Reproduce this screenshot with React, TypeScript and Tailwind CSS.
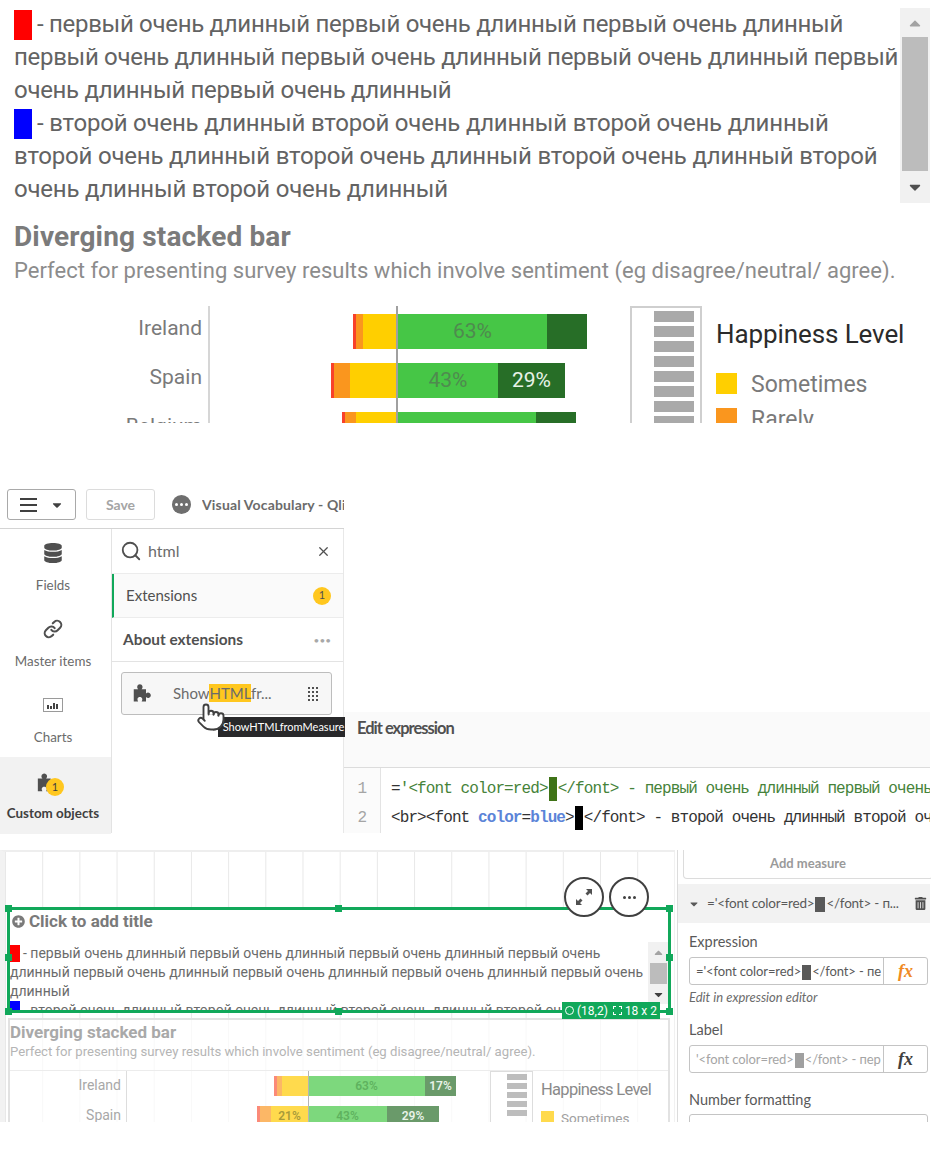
import React from "react";
import { FaDatabase, FaPlusCircle, FaTrashAlt, FaCaretDown, FaCaretUp } from "react-icons/fa";
import { Search, X, Pointer, Link } from "lucide-react";

const C = { red: "#f8412a", orange: "#fa961e", yellow: "#ffcf00", green: "#46c646", dark: "#276e27" };
type Seg = { w: number; c: string; t?: string; tc?: string };
type Row = { name: string; start: number; segs: Seg[] };

const bigRows: Row[] = [
  { name: "Ireland", start: 143, segs: [{ w: 3, c: C.red }, { w: 7, c: C.orange }, { w: 35, c: C.yellow }, { w: 149, c: C.green, t: "63%", tc: "#4f8a4f" }, { w: 40, c: C.dark }] },
  { name: "Spain", start: 121, segs: [{ w: 3, c: C.red }, { w: 16, c: C.orange }, { w: 48, c: C.yellow }, { w: 100, c: C.green, t: "43%", tc: "#4f8a4f" }, { w: 67, c: C.dark, t: "29%", tc: "#e8f3e8" }] },
  { name: "Belgium", start: 132, segs: [{ w: 3, c: C.red }, { w: 11, c: C.orange }, { w: 42, c: C.yellow }, { w: 138, c: C.green }, { w: 40, c: C.dark }] },
];
const smallRows: Row[] = [
  { name: "Ireland", start: 147, segs: [{ w: 3, c: "#fb8a78" }, { w: 5, c: "#fcb766" }, { w: 26, c: "#ffda4d" }, { w: 117, c: "#7dd87d", t: "63%", tc: "#5fb25f" }, { w: 31, c: "#6a9a6a", t: "17%", tc: "#e8f3e8" }] },
  { name: "Spain", start: 130, segs: [{ w: 3, c: "#fb8a78" }, { w: 11, c: "#fcb766" }, { w: 37, c: "#ffda4d", t: "21%", tc: "#a89a3a" }, { w: 79, c: "#7dd87d", t: "43%", tc: "#5fb25f" }, { w: 52, c: "#6a9a6a", t: "29%", tc: "#e8f3e8" }] },
];

function Puzzle({ size, className }: { size: number; className?: string }) {
  return (
    <svg width={size} height={size} viewBox="0 0 24 24" fill="currentColor" className={className}>
      <path d="M2 7h5c-1-1-1.2-2-1-3 .3-1.5 1.6-2.5 3-2.5s2.7 1 3 2.5c.2 1 0 2-1 3h5v5c1-1 2-1.2 3-1 1.5.3 2.5 1.6 2.5 3s-1 2.7-2.5 3c-1 .2-2 0-3-1v5h-5c.8-1 1-2 .7-3-.3-1.3-1.4-2-2.7-2s-2.4.7-2.7 2c-.3 1 0 2 .7 3H2z" />
    </svg>
  );
}

function Bar({ row, h }: { row: Row; h: string }) {
  return (
    <div className={`flex ${h}`} style={{ marginLeft: row.start }}>
      {row.segs.map((s, i) => (
        <div key={i} className="flex shrink-0 items-center justify-center" style={{ width: s.w, backgroundColor: s.c, color: s.tc }}>
          {s.t}
        </div>
      ))}
    </div>
  );
}

function MiniBars({ count, cls }: { count: number; cls: string }) {
  return (
    <>
      {Array.from({ length: count }).map((_, i) => (
        <div key={i} className={cls} />
      ))}
    </>
  );
}

const line1 = "первый очень длинный";
const line2 = "второй очень длинный";

function TopSection() {
  return (
    <section className="h-[423px] overflow-hidden">
      <div className="flex h-[206px] pt-2">
        <div className="w-[900px] shrink-0 pl-[14px] text-[24px] leading-[33px] whitespace-nowrap text-[#636363]">
          <div className="tracking-[-0.3px]">
            <div className="flex items-center"><span className="mr-[5px] h-[30px] w-[18px] bg-[#ff0000]" /><span>- {line1} {line1} {line1}</span></div>
            <div>{line1} {line1} {line1} первый</div>
            <div>очень длинный {line1}</div>
          </div>
          <div className="tracking-[-0.2px]">
            <div className="flex items-center"><span className="mr-[5px] h-[30px] w-[18px] bg-[#0000ff]" /><span>- {line2} {line2} {line2}</span></div>
            <div>{line2} {line2} {line2} второй</div>
            <div>очень длинный {line2}</div>
          </div>
        </div>
        <div className="flex h-[195px] w-[30px] flex-col items-center bg-[#f1f1f1]">
          <div className="flex h-[29px] items-center text-[#a3a3a3]"><FaCaretUp size={18} /></div>
          <div className="h-[134px] w-[26px] bg-[#bcbcbc]" />
          <div className="flex h-[32px] items-center text-[#505050]"><FaCaretDown size={18} /></div>
        </div>
      </div>
      <h2 className="mt-[13px] pl-[14px] text-[28px] leading-[36px] font-bold tracking-[0.15px] text-[#7b7b7b]">Diverging stacked bar</h2>
      <p className="pl-[14px] text-[22px] leading-[32px] tracking-[0.02px] whitespace-nowrap text-[#8c8c8c]">Perfect for presenting survey results which involve sentiment (eg disagree/neutral/ agree).</p>
      <div className="relative mt-[19px] flex h-[117px] overflow-hidden">
        <div className="w-[630px] shrink-0">
          {bigRows.map((r) => (
            <div key={r.name} className="flex h-[49px]">
              <div className="w-[208px] shrink-0 pt-[8px] pr-[6px] text-right text-[21px] leading-[28px] text-[#7a7a7a]">{r.name}</div>
              <div className="flex-1 border-l-2 border-[#d6d6d6] py-2 text-[21px] leading-none"><Bar row={r} h="h-[35px]" /></div>
            </div>
          ))}
          <div className="absolute top-0 left-[396px] h-full w-[2px] bg-[#a0a0a0]" />
        </div>
        <div className="flex w-[72px] shrink-0 flex-col items-end gap-[4px] border-2 border-b-0 border-[#cfcfcf] pt-[3px] pr-[6px]">
          <MiniBars count={8} cls="h-[11px] w-[40px] shrink-0 bg-[#a9a9a9]" />
        </div>
        <div className="pl-[14px]">
          <div className="mt-[12px] text-[26px] leading-[32px] tracking-[-0.1px] whitespace-nowrap text-[#2b2b2b]">Happiness Level</div>
          <div className="mt-[23px] flex h-[21px] items-center"><span className="h-[21px] w-[21px] bg-[#ffcf00]" /><span className="ml-[14px] pt-[4px] text-[23px] text-[#7a7a7a]">Sometimes</span></div>
          <div className="mt-[14px] flex h-[21px] items-center"><span className="h-[21px] w-[21px] bg-[#fa961e]" /><span className="ml-[14px] pt-[4px] text-[23px] text-[#7a7a7a]">Rarely</span></div>
        </div>
      </div>
    </section>
  );
}

function NavItem({ icon, label, active }: { icon: React.ReactNode; label: string; active?: boolean }) {
  return (
    <div className={`flex w-[111px] flex-col items-center pr-[5px] ${active ? "h-[77px] bg-[#f2f2f2] pt-[14px] font-bold text-[#404040]" : "h-[76px] pt-[12px] text-[#6b6b6b]"}`}>
      <div className="relative flex h-[24px] items-center justify-center text-[#505050]">{icon}</div>
      <div className={`text-[13.4px] leading-[18px] ${active ? "mt-[9px]" : "mt-[11px]"}`}>{label}</div>
    </div>
  );
}

function MiddleSection() {
  return (
    <section className="mt-[65px] flex h-[345px] font-['Lato','Noto_Sans',sans-serif]">
      <div className="relative w-[344px] shrink-0">
        <div className="flex h-[40px] items-start gap-[10px] pt-[1px] pl-[7px]">
          <div className="flex h-[31px] w-[69px] items-center justify-center gap-[13px] rounded-[3px] border border-[#a9a9a9]">
            <div className="flex w-[17px] flex-col gap-[4px]"><span className="h-[2px] bg-[#404040]" /><span className="h-[2px] bg-[#404040]" /><span className="h-[2px] bg-[#404040]" /></div>
            <FaCaretDown size={14} className="text-[#404040]" />
          </div>
          <div className="flex h-[31px] w-[69px] items-center justify-center rounded-[3px] border border-[#dcdcdc] text-[14px] font-bold text-[#a5a5a5]">Save</div>
          <div className="ml-[7px] flex h-[31px] w-[150px] items-center gap-[11px] whitespace-nowrap">
            <span className="flex h-[19px] w-[19px] shrink-0 items-center justify-center gap-[2px] rounded-full bg-[#6e6e6e]"><i className="h-[3px] w-[3px] rounded-full bg-white" /><i className="h-[3px] w-[3px] rounded-full bg-white" /><i className="h-[3px] w-[3px] rounded-full bg-white" /></span>
            <span className="w-[142px] shrink-0 overflow-hidden text-[14px] font-bold tracking-[0.15px] text-[#6b6b6b]">Visual Vocabulary - Qlik</span>
          </div>
        </div>
        <div className="flex h-[305px] border-t border-[#d4d4d4]">
          <div className="w-[112px] shrink-0 border-r border-[#e3e3e3]">
            <NavItem icon={<FaDatabase size={20} />} label="Fields" />
            <NavItem icon={<Link size={20} strokeWidth={2.5} />} label="Master items" />
            <NavItem icon={
              <svg width="20" height="16" viewBox="0 0 20 16"><rect x="0.5" y="1.5" width="19" height="13" fill="none" stroke="#9a9a9a" /><path d="M5 8v4M8 9v3M11 6v6M14 7v5" stroke="#444" strokeWidth="2" /></svg>
            } label="Charts" />
            <NavItem active icon={
              <><Puzzle size={22} className="mr-[12px]" /><span className="absolute top-[7px] left-[10px] flex h-[18px] w-[18px] items-center justify-center rounded-full bg-[#ffc71f] text-[11px] font-normal text-[#404040]">1</span></>
            } label="Custom objects" />
          </div>
          <div className="flex-1 border-r border-[#e8e8e8]">
            <div className="flex h-[45px] items-center border-b border-[#ececec] pr-[12px] pl-[8px] text-[#505050]">
              <Search size={22} strokeWidth={2} />
              <span className="ml-[6px] flex-1 text-[16px] text-[#6b6b6b]">html</span>
              <X size={15} />
            </div>
            <div className="flex h-[44px] items-center justify-between border-b border-l-2 border-[#ececec] border-l-[#11a85a] bg-[#fafafa] pr-[12px] pl-[12px] text-[15px] text-[#505050]">
              <span>Extensions</span>
              <span className="flex h-[18px] w-[18px] items-center justify-center rounded-full bg-[#ffc71f] text-[11px]">1</span>
            </div>
            <div className="flex h-[44px] items-center justify-between border-b border-[#e3e3e3] pr-[12px] pl-[11px] text-[15.4px] font-bold text-[#505050]">
              <span>About extensions</span>
              <span className="text-[10px] leading-none font-normal text-[#a8a8a8]">•••</span>
            </div>
            <div className="mt-[10px] mr-[11px] ml-[9px] flex h-[43px] items-center rounded-[3px] border border-[#bdbdbd] bg-[#f7f7f7] pr-[13px] pl-[10px] text-[15px] text-[#6b6b6b]">
              <Puzzle size={21} className="text-[#505050]" />
              <span className="ml-[20px] flex-1 whitespace-nowrap">Show<span className="bg-[#ffc71f]">HTML</span>fr...</span>
              <div className="grid grid-cols-3 gap-[2px]">
                {Array.from({ length: 12 }).map((_, i) => <i key={i} className="h-[2px] w-[2px] bg-[#505050]" />)}
              </div>
            </div>
          </div>
        </div>
        <div className="absolute top-[229px] left-[218px] flex h-[20px] w-[127px] items-center justify-center bg-[#28282a] pl-[4px] text-[11px] whitespace-nowrap text-white">ShowHTMLfromMeasure</div>
        <Pointer size={30} strokeWidth={1.5} className="absolute top-[214px] left-[196px] fill-white text-[#404040]" />
      </div>
      <div className="w-[586px] shrink-0 pt-[224px]">
        <div className="flex h-[56px] items-start border-b border-[#dcdcdc] bg-[#fafafa] pt-[4px] pl-[13px] text-[16.5px] font-bold tracking-[-1px] text-[#505050]">Edit expression</div>
        <div className="flex h-[65px] overflow-hidden font-['Liberation_Mono',monospace] text-[16px] leading-[29px] whitespace-nowrap">
          <div className="w-[37px] shrink-0 border-r border-[#e3e3e3] bg-[#fbfbfb] pt-[7px] pr-[13px] text-right text-[#a5a5a5]">
            <div>1</div><div>2</div>
          </div>
          <div className="w-[549px] overflow-hidden pt-[7px] pl-[10px] tracking-[-0.9px]">
            <div className="text-[#46833a]"><span className="text-[#333]">=</span>'&lt;font color=red&gt;<span className="mx-[1px] inline-block h-[24px] w-[8px] bg-[#3f7317] align-middle" />&lt;/font&gt; - первый очень длинный первый очень</div>
            <div className="text-[#333]">&lt;br&gt;&lt;font <span className="font-bold text-[#5b84d8]">color</span>=<span className="font-bold text-[#5b84d8]">blue</span>&gt;<span className="mx-[1px] inline-block h-[24px] w-[8px] bg-black align-middle" />&lt;/font&gt; - второй очень длинный второй очень</div>
          </div>
        </div>
      </div>
    </section>
  );
}

function Handle({ cls }: { cls: string }) {
  return <span className={`absolute h-[7px] w-[7px] bg-[#11a85a] ${cls}`} />;
}

function Canvas() {
  return (
    <div className="relative h-[272px] w-[675px] shrink-0 overflow-hidden border-t-2 border-l-[5px] border-[#eeeeee] border-l-[#f2f2f2] bg-[linear-gradient(to_right,#e8e8e8_1px,transparent_1px)] bg-[size:37.2px_100%] bg-[position:0px_0px] pt-[55px]">
      <div className="absolute top-[25px] right-[26px] z-10 flex gap-[5px]">
        <div className="flex h-[40px] w-[40px] items-center justify-center rounded-full border-2 border-[#404040] bg-white">
          <svg width="20" height="20" viewBox="0 0 20 20" fill="#505050"><path d="M12 2h6v6l-2-2-2.5 2.5-2-2L14 4zM8 18H2v-6l2 2 2.5-2.5 2 2L6 16z" /></svg>
        </div>
        <div className="flex h-[40px] w-[40px] items-center justify-center gap-[2px] rounded-full border-2 border-[#404040] bg-white">
          <i className="h-[3px] w-[3px] rounded-full bg-[#404040]" /><i className="h-[3px] w-[3px] rounded-full bg-[#404040]" /><i className="h-[3px] w-[3px] rounded-full bg-[#404040]" />
        </div>
      </div>
      <div className="relative ml-[2px] h-[106px] w-[664px] border-[3px] border-[#11a85a] bg-white">
        <div className="flex h-[23px] items-center gap-[4px] pl-[2px] text-[17px] font-bold text-[#7a7a7a]">
          <FaPlusCircle size={13} /><span>Click to add title</span>
        </div>
        <div className="mt-[9px] flex h-[68px] overflow-hidden">
          <div className="w-[638px] shrink-0 pt-[2px] text-[14px] leading-[19px] whitespace-nowrap text-[#6b6b6b]">
            <div className="flex items-center"><span className="mr-[3px] h-[17px] w-[10px] bg-[#ff0000]" />- {line1} {line1} {line1} первый очень</div>
            <div>длинный {line1} {line1} {line1} первый очень</div>
            <div>длинный</div>
            <div className="flex items-start"><span className="mr-[3px] h-[12px] w-[10px] bg-[#0000ff]" />- {line2} {line2} {line2} второй оч</div>
          </div>
          <div className="flex h-[62px] w-[20px] flex-col items-center bg-[#f1f1f1]">
            <div className="flex h-[21px] items-center text-[#a3a3a3]"><FaCaretUp size={13} /></div>
            <div className="h-[21px] w-[17px] bg-[#bcbcbc]" />
            <div className="flex h-[20px] items-center text-[#404040]"><FaCaretDown size={13} /></div>
          </div>
        </div>
        <Handle cls="-top-[5px] -left-[5px]" /><Handle cls="-top-[5px] left-[325px]" /><Handle cls="-top-[5px] -right-[5px]" />
        <Handle cls="top-[44px] -left-[5px]" /><Handle cls="top-[44px] -right-[5px]" />
        <Handle cls="-bottom-[5px] -left-[5px]" /><Handle cls="-bottom-[5px] left-[325px]" /><Handle cls="-bottom-[5px] -right-[5px]" />
        <div className="absolute -bottom-[9px] left-[552px] flex h-[17px] w-[98px] items-center justify-center gap-[3px] bg-[#11a85a] text-[12px] whitespace-nowrap text-white">
          <span className="h-[9px] w-[9px] rounded-full border border-white" /> (18,2) <span className="ml-[2px] h-[9px] w-[9px] border border-dashed border-white" /> 18 x 2
        </div>
      </div>
      <div className="mt-[5px] ml-[3px] h-[120px] w-[662px] border-2 border-[#e2e2e2] bg-white/70 pt-[1px]">
        <div className="text-[17px] leading-[22px] font-bold text-[#a9a9a9]">Diverging stacked bar</div>
        <div className="text-[13.15px] leading-[18px] whitespace-nowrap text-[#b5b5b5]">Perfect for presenting survey results which involve sentiment (eg disagree/neutral/ agree).</div>
        <div className="relative mt-[9px] flex border-t border-[#ececec]">
          <div className="w-[480px] shrink-0">
            {smallRows.map((r) => (
              <div key={r.name} className="flex h-[30px]">
                <div className="w-[116px] shrink-0 pt-[5px] pr-[5px] text-right text-[14px] leading-[18px] text-[#a8a8a8]">{r.name}</div>
                <div className="flex-1 border-l border-[#dddddd] py-[5px] text-[12px] font-semibold"><Bar row={r} h="h-[20px]" /></div>
              </div>
            ))}
            <div className="absolute top-0 left-[298px] h-full w-px bg-[#b5b5b5]" />
          </div>
          <div className="flex w-[43px] shrink-0 flex-col items-end gap-[3px] border border-b-0 border-[#dddddd] pt-[2px] pr-[5px]">
            <MiniBars count={5} cls="h-[6px] w-[20px] shrink-0 bg-[#bdbdbd]" />
          </div>
          <div className="pl-[8px]">
            <div className="mt-[8px] text-[16.5px] leading-[22px] tracking-[-0.7px] whitespace-nowrap text-[#8a8a8a]">Happiness Level</div>
            <div className="mt-[10px] flex items-start"><span className="h-[13px] w-[13px] bg-[#ffda4d]" /><span className="ml-[7px] text-[13.5px] leading-[14px] text-[#a0a0a0]">Sometimes</span></div>
          </div>
        </div>
      </div>
    </div>
  );
}

function Field({ label, value, muted, fx, tail }: { label: string; value: string; muted?: boolean; fx: string; tail: string }) {
  return (
    <div>
      <div className="text-[14.5px] leading-[20px] text-[#595959]">{label}</div>
      <div className="mt-[5px] flex h-[28px] w-[239px] items-center overflow-hidden rounded-[3px] border border-[#c4c4c4]">
        <div className={`w-[193px] shrink-0 overflow-hidden pl-[6px] text-[13px] leading-[26px] tracking-[-0.1px] whitespace-nowrap ${muted ? "text-[#a5a5a5]" : "text-[#595959]"}`}>
          {value}<span className={`mx-[1px] inline-block h-[15px] w-[9px] align-middle ${muted ? "bg-[#a0a0a0]" : "bg-[#595959]"}`} />&lt;/font&gt; - {tail}
        </div>
        <div className={`flex h-full flex-1 items-center justify-center border-l border-[#c4c4c4] font-['Liberation_Serif',serif] text-[18px] font-bold ${fx}`}><em>fx</em></div>
      </div>
    </div>
  );
}

function Props() {
  return (
    <div className="ml-[2px] h-[272px] w-[254px] shrink-0 overflow-hidden border-l border-[#dcdcdc] font-['Lato','Noto_Sans',sans-serif]">
      <div className="ml-[5px] flex h-[29px] w-[250px] items-center justify-center rounded-b-[4px] border border-t-0 border-[#dcdcdc] text-[13px] font-bold text-[#9a9a9a]">Add measure</div>
      <div className="mt-[5px] flex h-[39px] w-[252px] items-center bg-[#f2f2f2] pr-[3px] pl-[10px] text-[13.5px] tracking-[-0.2px] whitespace-nowrap text-[#595959]">
        <FaCaretDown size={12} />
        <span className="ml-[7px] flex-1">='&lt;font color=red&gt;<span className="mx-[1px] inline-block h-[15px] w-[10px] bg-[#595959] align-middle" />&lt;/font&gt; - п...</span>
        <FaTrashAlt size={13} className="text-[#505050]" />
      </div>
      <div className="px-[11px] pt-[9px]">
        <Field label="Expression" value="='<font color=red>" tail="пе" fx="text-[#f08a24]" />
        <div className="mt-[3px] text-[13px] leading-[18px] text-[#6b6b6b] italic">Edit in expression editor</div>
        <div className="mt-[14px]"><Field label="Label" value="'<font color=red>" tail="пер" muted fx="text-[#404040]" /></div>
        <div className="mt-[17px] text-[14.5px] leading-[20px] text-[#595959]">Number formatting</div>
        <div className="mt-[4px] h-[20px] w-[239px] rounded-t-[3px] border border-[#c4c4c4]" />
      </div>
    </div>
  );
}

export default function App() {
  return (
    <div className="h-[1157px] w-[946px] overflow-hidden bg-white font-['Roboto','Noto_Sans',sans-serif]">
      <TopSection />
      <MiddleSection />
      <section className="mt-[17px] flex h-[272px]">
        <Canvas />
        <Props />
      </section>
    </div>
  );
}
